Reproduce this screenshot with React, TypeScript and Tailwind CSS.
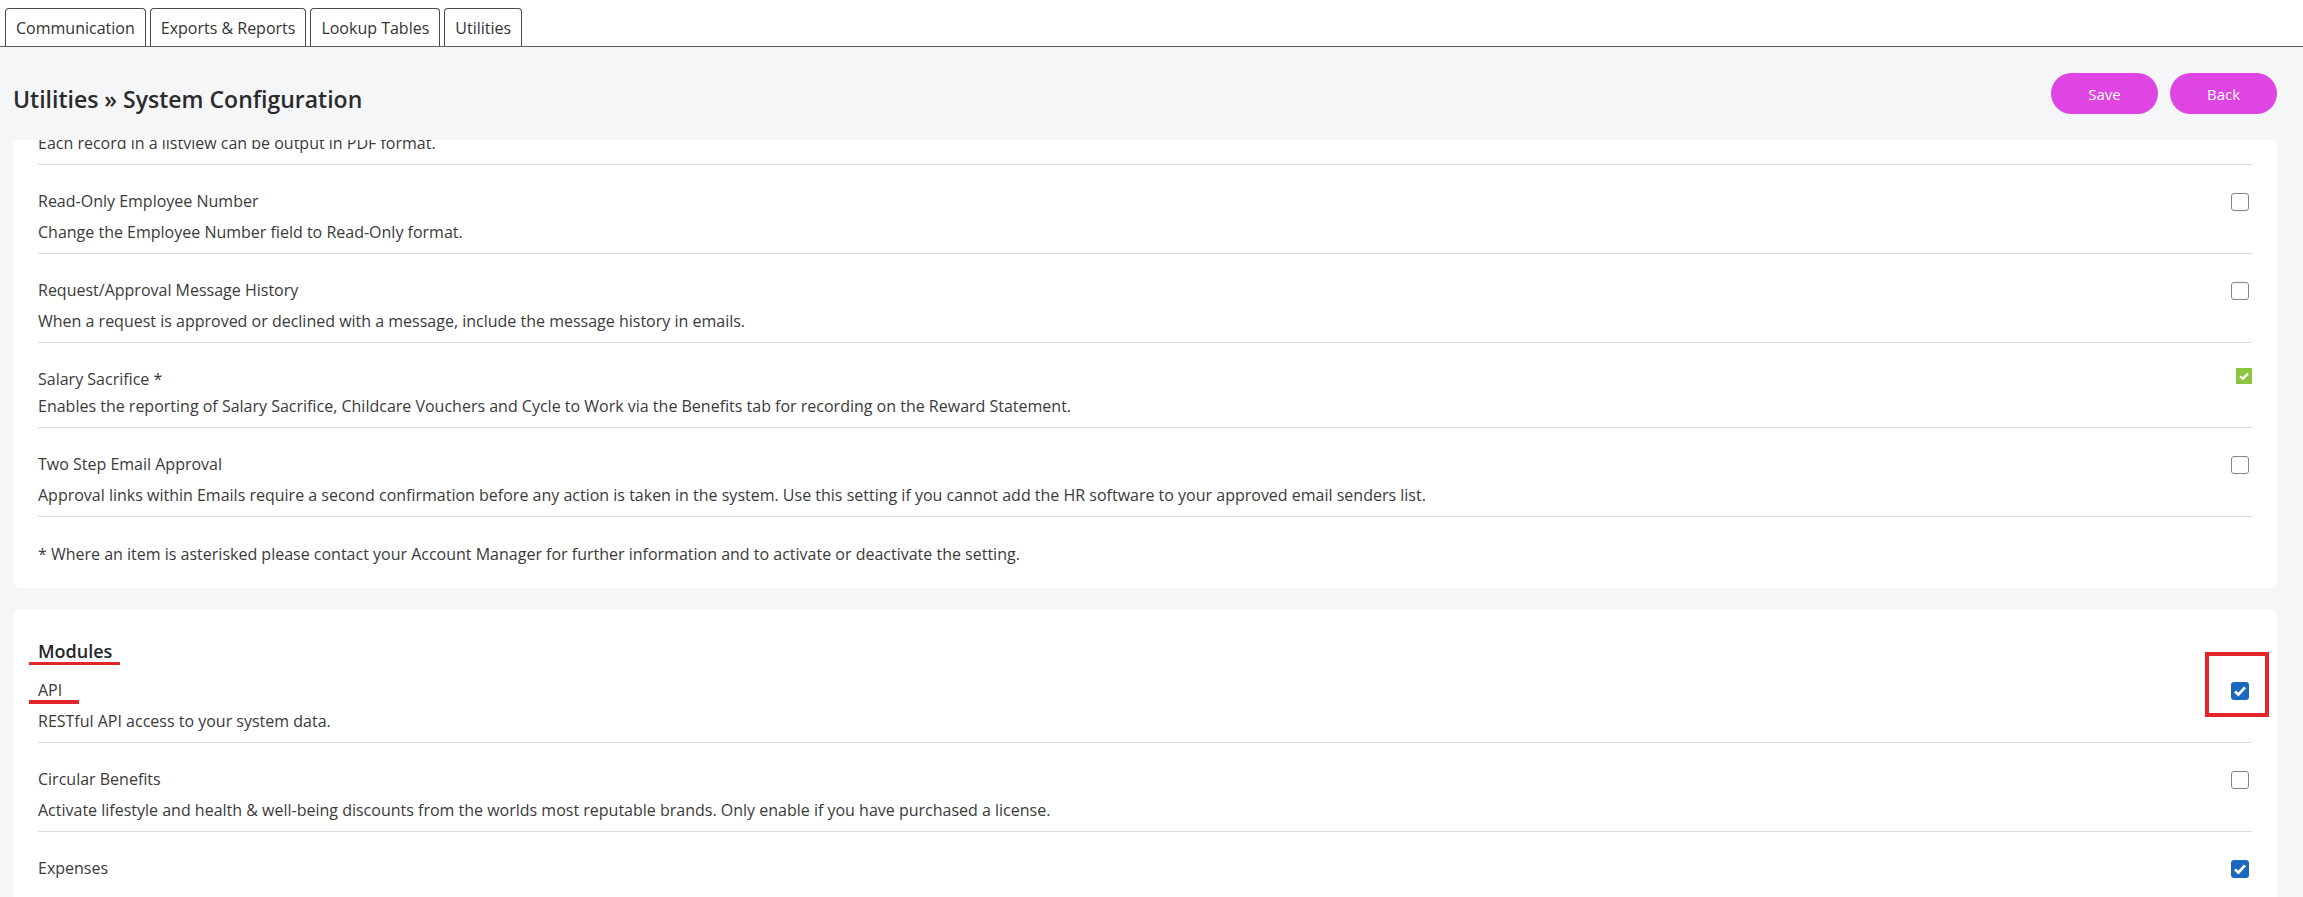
const tabs = ['Communication', 'Exports & Reports', 'Lookup Tables', 'Utilities']

export default function App() {
  return (
    <div className="flex h-[897px] flex-col overflow-hidden bg-[#f5f6f8] font-['Open_Sans',sans-serif] text-[16px] leading-[24px] text-[#3a3a3a]">
      <div className="flex h-[47px] shrink-0 items-end gap-[4px] border-b border-[#5a5a5a] bg-white pl-[5px]">
        {tabs.map((t) => (
          <div
            key={t}
            className="h-[38px] rounded-t-[4px] border border-b-0 border-[#4a4a4a] bg-white px-[10px] pt-[7px] text-[#333]"
          >
            {t}
          </div>
        ))}
      </div>

      <div className="flex h-[93px] shrink-0 items-start justify-between pl-[13px] pr-[26px]">
        <div className="mt-[36px] text-[23px] leading-[32px] font-semibold text-[#2b2b2b]">
          Utilities » System Configuration
        </div>
        <div className="mt-[26px] flex gap-[12px]">
          <button className="h-[41px] w-[107px] rounded-full bg-[#df45e2] text-[15px] text-white">Save</button>
          <button className="h-[41px] w-[107px] rounded-full bg-[#df45e2] text-[15px] text-white">Back</button>
        </div>
      </div>

      <div className="flex-1 overflow-hidden pl-[13px] pr-[26px]">
        <div className="-mt-[20px] rounded-lg bg-white px-[25px] pb-[22px]">
          <div className="border-b border-[#dcdcdc] pt-[11px] pb-[9px]">
            Each record in a listview can be output in PDF format.
          </div>
          <Row
            title="Read-Only Employee Number"
            desc="Change the Employee Number field to Read-Only format."
          />
          <Row
            title="Request/Approval Message History"
            desc="When a request is approved or declined with a message, include the message history in emails."
          />
          <Row
            title="Salary Sacrifice *"
            desc="Enables the reporting of Salary Sacrifice, Childcare Vouchers and Cycle to Work via the Benefits tab for recording on the Reward Statement."
            box="green"
            tight
          />
          <Row
            title="Two Step Email Approval"
            desc="Approval links within Emails require a second confirmation before any action is taken in the system. Use this setting if you cannot add the HR software to your approved email senders list."
          />
          <div className="pt-[25px]">
            * Where an item is asterisked please contact your Account Manager for further information and to activate or
            deactivate the setting.
          </div>
        </div>

        <div className="mt-[21px] rounded-lg bg-white px-[25px] pt-[30px] pb-[40px]">
          <div className="relative w-fit text-[18px] leading-[24px] font-semibold text-[#262626]">
            Modules
            <span className="absolute top-[23px] -left-[9px] h-[3px] w-[91px] bg-[#e3262b]" />
          </div>
          <Row title="API" desc="RESTful API access to your system data." box="blue" first annotate />
          <Row
            title="Circular Benefits"
            desc="Activate lifestyle and health & well-being discounts from the worlds most reputable brands. Only enable if you have purchased a license."
          />
          <Row title="Expenses" box="blue" />
        </div>
      </div>
    </div>
  )
}

function Row({
  title,
  desc,
  box,
  tight,
  first,
  annotate,
}: {
  title: string
  desc?: string
  box?: 'blue' | 'green'
  tight?: boolean
  first?: boolean
  annotate?: boolean
}) {
  return (
    <div className={`flex items-start justify-between border-b border-[#dcdcdc] pb-[9px] ${first ? 'pt-[15px]' : 'pt-6'}`}>
      <div>
        <div className="relative w-fit">
          {title}
          {annotate && <span className="absolute top-[22px] -left-[9px] h-[4px] w-[50px] bg-[#e3262b]" />}
        </div>
        {desc ? (
          <div className={tight ? 'mt-[3px]' : 'mt-[7px]'}>{desc}</div>
        ) : (
          <div className="mt-[7px] h-[24px]" />
        )}
      </div>
      <div className="relative">
        {annotate && (
          <div className="absolute -top-[26px] -left-[26px] h-[65px] w-[64px] border-[4px] border-[#e3262b]" />
        )}
        <Check kind={box} />
      </div>
    </div>
  )
}

function Check({ kind }: { kind?: 'blue' | 'green' }) {
  if (kind === 'green') {
    return (
      <div className="mt-[1px] flex h-[16px] w-[16px] items-center justify-center bg-[#8cc63e]">
        <svg width="16" height="16" viewBox="0 0 16 16">
          <path d="M4 8.2 L6.8 10.8 L12 5.6" fill="none" stroke="white" strokeWidth="2.2" />
        </svg>
      </div>
    )
  }
  if (kind === 'blue') {
    return (
      <div className="mt-[4px] mr-[3px] flex h-[18px] w-[18px] items-center justify-center rounded-[3px] bg-[#1b69bf]">
        <svg width="18" height="18" viewBox="0 0 18 18">
          <path d="M4 9.4 L7.4 12.6 L14 5.4" fill="none" stroke="white" strokeWidth="2.8" />
        </svg>
      </div>
    )
  }
  return <div className="mt-[4px] mr-[3px] h-[18px] w-[18px] rounded-[3px] border border-[#858585] bg-white" />
}
